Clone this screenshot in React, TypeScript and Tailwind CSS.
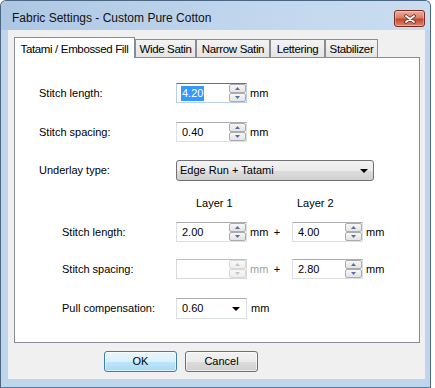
import React from "react";

function SpinArrows({ disabled }: { disabled?: boolean }) {
  const arrow = disabled ? "#c6c6c6" : "#56709c";
  const btn =
    "h-[9px] flex items-center justify-center rounded-[2px] border " +
    (disabled
      ? "border-[#d8d8d8] bg-[linear-gradient(#f8f8f8,#eeeeee)]"
      : "border-[#acacac] bg-[linear-gradient(#f7f7f7,#e3e3e3)]");
  return (
    <div className="w-[17px] flex flex-col">
      <div className={btn}>
        <svg width="5" height="3" viewBox="0 0 5 3">
          <path d="M2.5 0 L5 3 L0 3 Z" fill={arrow} />
        </svg>
      </div>
      <div className={btn}>
        <svg width="5" height="3" viewBox="0 0 5 3">
          <path d="M0 0 L5 0 L2.5 3 Z" fill={arrow} />
        </svg>
      </div>
    </div>
  );
}

function SpinBox({
  value,
  focused,
  disabled,
}: {
  value?: string;
  focused?: boolean;
  disabled?: boolean;
}) {
  const border = focused
    ? "border-[#b7d0e8] border-t-[#3c7fb1]"
    : disabled
    ? "border-[#d9d9d9] border-t-[#bfbfbf]"
    : "border-[#dbdfe6] border-t-[#abadb3]";
  return (
    <div className={"w-[71px] h-[20px] flex border bg-white " + border}>
      <div className="flex-1 flex items-center pl-[5px]">
        {focused ? (
          <span className="inline-block h-[15px] leading-[15px] bg-[#3399ff] text-white px-px -ml-px">
            {value}
          </span>
        ) : (
          <span className="leading-[15px]">{value}</span>
        )}
      </div>
      <SpinArrows disabled={disabled} />
    </div>
  );
}

function Label({ children, sub }: { children: React.ReactNode; sub?: boolean }) {
  return (
    <div className={sub ? "w-[161px] pl-[47px]" : "w-[161px] pl-[24px]"}>{children}</div>
  );
}

export default function App() {
  return (
    <div className="w-[435px] h-[388px] bg-white font-['Liberation_Sans',Arial,sans-serif] text-[11px] text-black">
      <div className="w-[431px] h-[388px] flex flex-col rounded-t-[6px] border border-[#4b6682] border-b-[#2f8fb0] bg-[#bfd5ec]">
        {/* Title bar */}
        <div className="h-[29px] flex items-start rounded-t-[5px] bg-[linear-gradient(90deg,#adc7e3,#c2d7ee_60%,#c9dcf0)]">
          <span className="ml-[11px] mt-[10px] text-[12px] leading-[15px] text-[#111]">
            Fabric Settings - Custom Pure Cotton
          </span>
          <div className="ml-auto mr-[5px] mt-[9px] w-[31px] h-[17px] rounded-[3px] border border-[#7e2a1e] bg-[linear-gradient(#e9b0a2,#d77d66_45%,#c3462e_55%,#d98a72)] shadow-[inset_0_0_0_1px_rgba(255,255,255,0.3)] flex items-center justify-center">
            <svg width="12" height="10" viewBox="0 0 12 10">
              <path d="M2 2 L10 8 M10 2 L2 8" stroke="#5a1c12" strokeWidth="3.4" strokeLinecap="round" />
              <path d="M2 2 L10 8 M10 2 L2 8" stroke="#ffffff" strokeWidth="2" strokeLinecap="round" />
            </svg>
          </div>
        </div>

        {/* Client area */}
        <div className="ml-[7px] mr-[5px] h-[349px] bg-[#f0f0f0] flex flex-col">
          {/* Tabs */}
          <div className="mt-[7px] ml-[6px] h-[20px] flex items-start">
            <div className="relative z-10 w-[121px] h-[21px] bg-white border border-b-0 border-[#898c95] flex items-start justify-center pt-[3px] text-[11.5px] tracking-[-0.35px]">
              Tatami / Embossed Fill
            </div>
            {[
              ["Wide Satin", "w-[61px]"],
              ["Narrow Satin", "w-[74px]"],
              ["Lettering", "w-[55px]"],
              ["Stabilizer", "w-[53px]"],
            ].map(([t, w]) => (
              <div
                key={t}
                className={
                  w +
                  " mt-[2px] h-[18px] border border-b-0 border-[#898c95] bg-[linear-gradient(#f3f3f3,#e4e4e4)] flex items-center justify-center pt-[2px] text-[11.5px] tracking-[-0.35px]"
                }
              >
                {t}
              </div>
            ))}
          </div>

          {/* Panel */}
          <div className="ml-[6px] w-[406px] h-[286px] bg-white border border-[#898c95] flex flex-col">
            <div className="mt-[25px] h-[20px] flex items-center">
              <Label>Stitch length:</Label>
              <SpinBox value="4.20" focused />
              <span className="ml-[3px]">mm</span>
            </div>
            <div className="mt-[19px] h-[20px] flex items-center">
              <Label>Stitch spacing:</Label>
              <SpinBox value="0.40" />
              <span className="ml-[3px]">mm</span>
            </div>
            <div className="mt-[18px] h-[21px] flex items-center">
              <Label>Underlay type:</Label>
              <div className="w-[198px] h-[21px] rounded-[3px] border border-[#707070] bg-[linear-gradient(#f2f2f2,#ebebeb_50%,#dddddd_51%,#cfcfcf)] flex items-center pl-[3px] pr-[5px]">
                <span className="flex-1">Edge Run + Tatami</span>
                <svg width="8" height="4" viewBox="0 0 8 4">
                  <path d="M0 0 L8 0 L4 4 Z" fill="#000" />
                </svg>
              </div>
            </div>
            <div className="mt-[15px] h-[14px] flex items-center">
              <div className="w-[161px]" />
              <div className="w-[71px] pl-[20px]">Layer 1</div>
              <div className="w-[45px]" />
              <div className="pl-[5px]">Layer 2</div>
            </div>
            <div className="mt-[12px] h-[20px] flex items-center">
              <Label sub>Stitch length:</Label>
              <SpinBox value="2.00" />
              <span className="ml-[3px] w-[21px]">mm</span>
              <span className="w-[12px] text-center">+</span>
              <div className="ml-[9px]">
                <SpinBox value="4.00" />
              </div>
              <span className="ml-[3px]">mm</span>
            </div>
            <div className="mt-[17px] h-[20px] flex items-center">
              <Label sub>Stitch spacing:</Label>
              <SpinBox value="" disabled />
              <span className="ml-[3px] w-[21px] text-[#a0a0a0]">mm</span>
              <span className="w-[12px] text-center">+</span>
              <div className="ml-[9px]">
                <SpinBox value="2.80" />
              </div>
              <span className="ml-[3px]">mm</span>
            </div>
            <div className="mt-[19px] h-[21px] flex items-center">
              <Label sub>Pull compensation:</Label>
              <div className="w-[71px] h-[21px] border border-[#dbdfe6] border-t-[#abadb3] bg-white flex items-center pl-[5px] pr-[6px]">
                <span className="flex-1">0.60</span>
                <svg width="8" height="4" viewBox="0 0 8 4">
                  <path d="M0 0 L8 0 L4 4 Z" fill="#000" />
                </svg>
              </div>
              <span className="ml-[4px]">mm</span>
            </div>
          </div>

          {/* Buttons */}
          <div className="mt-[8px] ml-[96px] flex gap-[8px]">
            <div className="w-[73px] h-[21px] rounded-[3px] border border-[#3c7fb1] bg-[linear-gradient(#eaf6fd,#d9f0fc_50%,#bee6fd_51%,#a7d9f5)] shadow-[inset_0_0_0_1px_rgba(255,255,255,0.6)] flex items-center justify-center">
              OK
            </div>
            <div className="w-[73px] h-[21px] rounded-[3px] border border-[#707070] bg-[linear-gradient(#f2f2f2,#ebebeb_50%,#dddddd_51%,#cfcfcf)] shadow-[inset_0_0_0_1px_rgba(255,255,255,0.6)] flex items-center justify-center">
              Cancel
            </div>
          </div>
        </div>
      </div>
    </div>
  );
}
